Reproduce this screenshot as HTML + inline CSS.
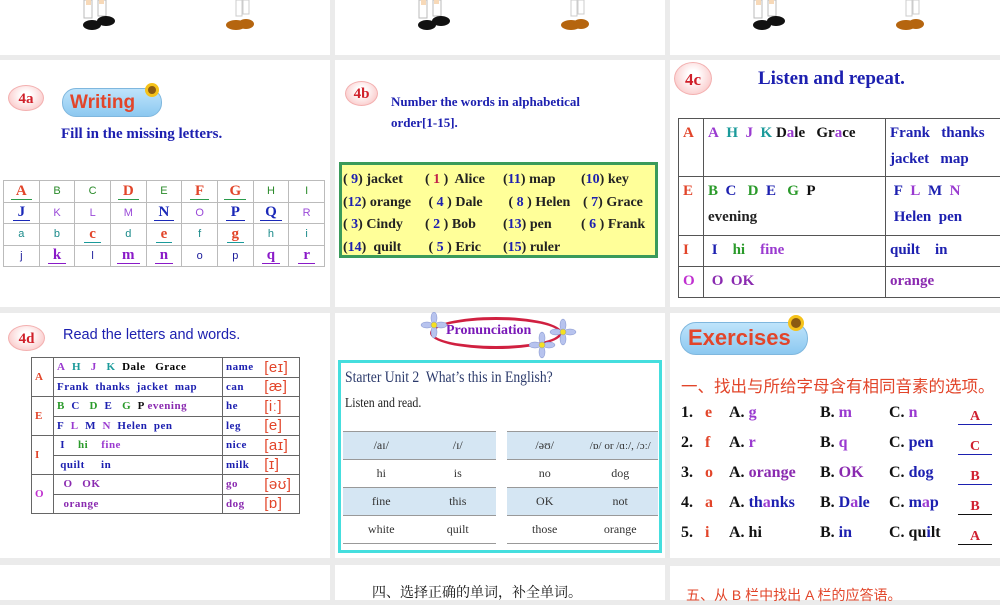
<!DOCTYPE html>
<html><head><meta charset="utf-8"><style>
*{margin:0;padding:0;box-sizing:border-box}
body{width:1000px;height:600px;background:#ebebeb;position:relative;overflow:hidden;font-family:"Liberation Serif",serif}
.p{position:absolute;background:#fff}
.a{position:absolute;white-space:nowrap}
.ov{position:absolute;border-radius:50%;background:radial-gradient(ellipse at 50% 40%,#fff 20%,#fbd3d3 70%,#f19a9a);border:1px solid #f3b0b0;color:#d0202a;font-weight:bold;font-size:15px;text-align:center}
.pill{position:absolute;border-radius:14px;background:linear-gradient(#bfe4fb,#8cc8f0);border:1px solid #7fb7de;color:#e2452a;font-family:"Liberation Sans",sans-serif;font-weight:bold}
table{border-collapse:collapse;position:absolute}
.t1 td{border:1px solid #bbb;text-align:center;font-family:"Liberation Sans",sans-serif;font-size:11px;height:21.5px;width:35.8px}
.t1 u{font-family:"Liberation Serif",serif;font-weight:bold;font-size:15px;text-decoration:none;border-bottom:1.5px solid;padding:0 5px}
.b{font-weight:bold}
.t3 td{border:1px solid #555;font-weight:bold;font-size:15px;vertical-align:top;padding:1px 4px;line-height:26px;white-space:nowrap}
.t4 td{border:1px solid #666;font-weight:bold;font-size:11px;height:19.5px;padding:0 3px;letter-spacing:.5px}
.t5{font-size:12px;color:#333}
.t5 td{height:28px;text-align:center;border-top:1px solid #999;width:76px}
.t5 tr.h td{background:#d5e6f3}
.ex{position:absolute;font-weight:bold;font-size:16px;color:#111}
.sun{position:absolute;width:14px;height:14px;border-radius:50%;background:#8a5a12;border:3px solid #f5c21a}
</style></head><body>
<div class="p" style="left:0;top:0;width:330px;height:55px"></div>
<div class="p" style="left:335px;top:0;width:330px;height:55px"></div>
<div class="p" style="left:670px;top:0;width:330px;height:55px"></div>
<svg class="a" style="left:0;top:0" width="1000" height="40">
<g id="g"><rect x="84" y="0" width="8" height="18" fill="#fff" stroke="#bbb"/><rect x="98" y="0" width="8" height="16" fill="#fff" stroke="#bbb"/><rect x="86" y="0" width="5" height="5" fill="#f7d9b8"/><rect x="99" y="0" width="5" height="4" fill="#f7d9b8"/>
<ellipse cx="92" cy="25" rx="9" ry="5" fill="#111"/><ellipse cx="106" cy="21" rx="9" ry="5" fill="#111"/>
<rect x="236" y="0" width="6" height="16" fill="#fff" stroke="#ccc"/><rect x="243" y="0" width="6" height="14" fill="#fff" stroke="#ccc"/>
<ellipse cx="236" cy="25" rx="10" ry="5" fill="#b5650f"/><ellipse cx="246" cy="24" rx="8" ry="5" fill="#b5650f"/></g>
<use href="#g" x="335"/><use href="#g" x="670"/>
</svg>
<!-- 4a -->
<div class="p" style="left:0;top:60px;width:330px;height:247px"></div>
<div class="ov" style="left:8px;top:85px;width:36px;height:26px;line-height:26px">4a</div>
<div class="pill" style="left:62px;top:88px;width:100px;height:29px;font-size:19px;line-height:28px;padding-left:7px">Writing</div>
<div class="sun" style="left:145px;top:83px"></div>
<div class="a b" style="left:61px;top:126px;font-size:15px;color:#1d20b0">Fill in the missing letters.</div>
<table class="t1" style="left:3px;top:180px;width:322px">
<tr style="color:#2a8a2a"><td><u style="color:#e2452a;border-color:#2a9a4a">A</u></td><td>B</td><td>C</td><td><u style="color:#e2452a;border-color:#2a9a4a">D</u></td><td>E</td><td><u style="color:#e2452a;border-color:#2a9a4a">F</u></td><td><u style="color:#e2452a;border-color:#2a9a4a">G</u></td><td>H</td><td>I</td></tr>
<tr style="color:#9a4ad8"><td><u style="color:#1a28b8">J</u></td><td>K</td><td>L</td><td>M</td><td><u style="color:#1a28b8">N</u></td><td>O</td><td><u style="color:#1a28b8">P</u></td><td><u style="color:#1a28b8">Q</u></td><td>R</td></tr>
<tr style="color:#1a8a8a"><td>a</td><td>b</td><td><u style="color:#e2452a;border-color:#1a9a9a">c</u></td><td>d</td><td><u style="color:#e2452a;border-color:#1a9a9a">e</u></td><td>f</td><td><u style="color:#e2452a;border-color:#1a9a9a">g</u></td><td>h</td><td>i</td></tr>
<tr style="color:#1a1a9a"><td>j</td><td><u style="color:#8a1ac8">k</u></td><td>l</td><td><u style="color:#8a1ac8">m</u></td><td><u style="color:#8a1ac8">n</u></td><td>o</td><td>p</td><td><u style="color:#8a1ac8">q</u></td><td><u style="color:#8a1ac8">r</u></td></tr>
</table>
<!-- 4b -->
<div class="p" style="left:335px;top:60px;width:330px;height:247px"></div>
<div class="ov" style="left:345px;top:81px;width:33px;height:25px;line-height:25px">4b</div>
<div class="a b" style="left:391px;top:91px;font-size:13px;color:#1d20b0;line-height:21px">Number the words in alphabetical<br>order[1-15].</div>
<div class="a" style="left:339px;top:162px;width:319px;height:96px;background:#ffff99;border:3px solid #3a9a5a"></div>
<div class="a b" style="left:343px;top:169px;font-size:14px;color:#222;line-height:22.5px">
<span style="display:inline-block;width:82px">( <span style="color:#1d20b0">9</span>) jacket</span><span style="display:inline-block;width:78px">( <span style="color:#c0204a">1</span> )&nbsp; Alice</span><span style="display:inline-block;width:78px">(<span style="color:#1d20b0">11</span>) map</span>(<span style="color:#1d20b0">10</span>) key<br>
<span style="display:inline-block;width:82px">(<span style="color:#1d20b0">12</span>) orange</span><span style="display:inline-block;width:80px">&nbsp;( <span style="color:#1d20b0">4</span> ) Dale</span><span style="display:inline-block;width:78px">&nbsp;( <span style="color:#1d20b0">8</span> ) Helen</span>( <span style="color:#1d20b0">7</span>) Grace<br>
<span style="display:inline-block;width:82px">( <span style="color:#1d20b0">3</span>) Cindy</span><span style="display:inline-block;width:78px">( <span style="color:#1d20b0">2</span> ) Bob</span><span style="display:inline-block;width:78px">(<span style="color:#1d20b0">13</span>) pen</span>( <span style="color:#1d20b0">6</span> ) Frank<br>
<span style="display:inline-block;width:82px">(<span style="color:#1d20b0">14</span>)&nbsp; quilt</span><span style="display:inline-block;width:78px">&nbsp;( <span style="color:#1d20b0">5</span> ) Eric</span>(<span style="color:#1d20b0">15</span>) ruler</div>
<!-- 4c -->
<div class="p" style="left:670px;top:60px;width:330px;height:247px"></div>
<div class="ov" style="left:674px;top:62px;width:38px;height:33px;line-height:33px;font-size:17px">4c</div>
<div class="a b" style="left:758px;top:68px;font-size:19px;color:#1d20b0">Listen and repeat.</div>
<table class="t3" style="left:678px;top:118px;width:324px">
<tr style="height:58px"><td style="width:25px;color:#e2452a">A</td><td style="width:182px"><span style="color:#9a3ad0">A</span>&nbsp; <span style="color:#1a9a9a">H</span>&nbsp; <span style="color:#9a3ad0">J</span>&nbsp; <span style="color:#1a9a9a">K</span> <span style="color:#111">D<span style="color:#9a3ad0">a</span>le&nbsp;&nbsp; Gr<span style="color:#9a3ad0">a</span>ce</span></td><td style="color:#1d20b0">Frank&nbsp;&nbsp; thanks<br>jacket&nbsp;&nbsp; map</td></tr>
<tr style="height:59px"><td style="color:#e2452a">E</td><td><span style="color:#2a9a2a">B</span>&nbsp; <span style="color:#1d20b0">C</span>&nbsp;&nbsp; <span style="color:#2a9a2a">D</span>&nbsp; <span style="color:#1d20b0">E</span>&nbsp;&nbsp; <span style="color:#2a9a2a">G</span>&nbsp; <span style="color:#111">P</span><br><span style="color:#222">evening</span></td><td style="color:#1d20b0">&nbsp;F&nbsp; <span style="color:#9a3ad0">L</span>&nbsp; M&nbsp; <span style="color:#9a3ad0">N</span><br>&nbsp;Helen&nbsp; pen</td></tr>
<tr style="height:31px"><td style="color:#e2452a">I</td><td>&nbsp;<span style="color:#1d20b0">I</span>&nbsp;&nbsp;&nbsp; <span style="color:#2a9a2a">hi</span>&nbsp;&nbsp;&nbsp; <span style="color:#9a3ad0">fine</span></td><td style="color:#1d20b0">quilt&nbsp;&nbsp;&nbsp; in</td></tr>
<tr style="height:31px"><td style="color:#c030d0">O</td><td style="color:#8a2ab0">&nbsp;O&nbsp; OK</td><td style="color:#8a2ab0">orange</td></tr>
</table>
<!-- 4d -->
<div class="p" style="left:0;top:313px;width:330px;height:245px"></div>
<div class="ov" style="left:8px;top:325px;width:37px;height:26px;line-height:26px">4d</div>
<div class="a" style="left:63px;top:327px;font-family:'Liberation Sans',sans-serif;font-size:14.5px;color:#1d20b0">Read the letters and words.</div>
<table class="t4" style="left:31px;top:357px;width:269px">
<tr><td rowspan="2" style="width:22px;color:#e2452a">A</td><td style="width:169px"><span style="color:#9a3ad0">A</span>&nbsp; <span style="color:#1a9a9a">H</span>&nbsp;&nbsp; <span style="color:#9a3ad0">J</span>&nbsp;&nbsp; <span style="color:#1a9a9a">K</span>&nbsp; Dale&nbsp;&nbsp; Grace</td><td style="color:#1d20b0;border-right:none">name</td><td style="border-left:none;color:#e2452a;font-weight:normal;font-family:'Liberation Sans';font-size:15px">[eɪ]</td></tr>
<tr><td style="color:#1d20b0">Frank&nbsp; thanks&nbsp; jacket&nbsp; map</td><td style="color:#1d20b0;border-right:none">can</td><td style="border-left:none;color:#e2452a;font-weight:normal;font-family:'Liberation Sans';font-size:15px">[æ]</td></tr>
<tr><td rowspan="2" style="color:#e2452a">E</td><td><span style="color:#2a9a2a">B</span>&nbsp; <span style="color:#1d20b0">C</span>&nbsp;&nbsp; <span style="color:#2a9a2a">D</span>&nbsp; <span style="color:#1d20b0">E</span>&nbsp;&nbsp; <span style="color:#2a9a2a">G</span>&nbsp; <span style="color:#111">P</span> <span style="color:#8a2ab0">evening</span></td><td style="color:#1d20b0;border-right:none">he</td><td style="border-left:none;color:#e2452a;font-weight:normal;font-family:'Liberation Sans';font-size:15px">[iː]</td></tr>
<tr><td style="color:#1d20b0">F&nbsp; <span style="color:#9a3ad0">L</span>&nbsp; M&nbsp; <span style="color:#9a3ad0">N</span>&nbsp; Helen&nbsp; pen</td><td style="color:#1d20b0;border-right:none">leg</td><td style="border-left:none;color:#e2452a;font-weight:normal;font-family:'Liberation Sans';font-size:15px">[e]</td></tr>
<tr><td rowspan="2" style="color:#e2452a">I</td><td>&nbsp;<span style="color:#1d20b0">I</span>&nbsp;&nbsp;&nbsp; <span style="color:#2a9a2a">hi</span>&nbsp;&nbsp;&nbsp; <span style="color:#9a3ad0">fine</span></td><td style="color:#1d20b0;border-right:none">nice</td><td style="border-left:none;color:#e2452a;font-weight:normal;font-family:'Liberation Sans';font-size:15px">[aɪ]</td></tr>
<tr><td style="color:#1d20b0">&nbsp;quilt&nbsp;&nbsp;&nbsp;&nbsp; in</td><td style="color:#1d20b0;border-right:none">milk</td><td style="border-left:none;color:#e2452a;font-weight:normal;font-family:'Liberation Sans';font-size:15px">[ɪ]</td></tr>
<tr><td rowspan="2" style="color:#c030d0">O</td><td style="color:#8a2ab0">&nbsp;&nbsp;O&nbsp;&nbsp; OK</td><td style="color:#8a2ab0;border-right:none">go</td><td style="border-left:none;color:#e2452a;font-weight:normal;font-family:'Liberation Sans';font-size:15px">[əʊ]</td></tr>
<tr><td style="color:#8a2ab0">&nbsp;&nbsp;orange</td><td style="color:#8a2ab0;border-right:none">dog</td><td style="border-left:none;color:#e2452a;font-weight:normal;font-family:'Liberation Sans';font-size:15px">[ɒ]</td></tr>
</table>
<!-- Pronunciation -->
<div class="p" style="left:335px;top:313px;width:330px;height:245px"></div>
<div class="a" style="left:430px;top:317px;width:132px;height:32px;border:3px solid #d02040;border-radius:50%;background:#fff"></div>
<div class="a b" style="left:446px;top:323px;font-size:14px;color:#7a1ab8">Pronunciation</div>
<svg class="a" style="left:420px;top:312px" width="160" height="50">
<g fill="#b7c3ee" stroke="#8090cc" stroke-width=".5"><g id="fl"><ellipse cx="14" cy="6" rx="3" ry="6"/><ellipse cx="14" cy="20" rx="3" ry="6"/><ellipse cx="7" cy="13" rx="6" ry="3"/><ellipse cx="21" cy="13" rx="6" ry="3"/><circle cx="14" cy="13" r="3" fill="#f5e020"/></g>
<use href="#fl" x="129" y="7"/><use href="#fl" x="108" y="20"/></g></svg>
<div class="a" style="left:338px;top:360px;width:324px;height:193px;border:3px solid #45dede;background:#fff"></div>
<div class="a" style="left:345px;top:369px;font-size:15.5px;color:#2b3a6b;transform:scaleX(.88);transform-origin:left">Starter Unit 2&nbsp; What’s this in English?</div>
<div class="a" style="left:345px;top:396px;font-size:14px;color:#222;transform:scaleX(.85);transform-origin:left">Listen and read.</div>
<table class="t5" style="left:343px;top:431px;width:153px"><tr class="h"><td>/aɪ/</td><td>/ɪ/</td></tr><tr><td>hi</td><td>is</td></tr><tr class="h"><td>fine</td><td>this</td></tr><tr style="border-bottom:1px solid #999"><td>white</td><td>quilt</td></tr></table>
<table class="t5" style="left:507px;top:431px;width:151px"><tr class="h"><td>/əʊ/</td><td style="font-size:11px">/ɒ/ or /ɑː/, /ɔː/</td></tr><tr><td>no</td><td>dog</td></tr><tr class="h"><td>OK</td><td>not</td></tr><tr style="border-bottom:1px solid #999"><td>those</td><td>orange</td></tr></table>
<!-- Exercises -->
<div class="p" style="left:670px;top:313px;width:330px;height:245px"></div>
<div class="pill" style="left:680px;top:322px;width:128px;height:33px;font-size:22px;line-height:30px;padding-left:7px;border-radius:16px">Exercises</div>
<div class="sun" style="left:788px;top:315px;width:16px;height:16px"></div>
<div class="a" style="left:681px;top:373px;font-family:'Noto Sans CJK SC',sans-serif;font-size:16.5px;color:#e2452a">一、找出与所给字母含有相同音素的选项。</div>
<div class="ex" style="left:681px;top:398px;line-height:30px">1.<br>2.<br>3.<br>4.<br>5.</div>
<div class="ex" style="left:705px;top:398px;line-height:30px;color:#e2452a">e<br>f<br>o<br>a<br>i</div>
<div class="ex" style="left:729px;top:398px;line-height:30px">A. <span style="color:#9a3ad0">g</span><br>A. <span style="color:#9a3ad0">r</span><br>A. <span style="color:#8a2ab0">orange</span><br>A. <span style="color:#1d20b0">th<span style="color:#9a3ad0">a</span>nks</span><br>A. hi</div>
<div class="ex" style="left:820px;top:398px;line-height:30px">B. <span style="color:#9a3ad0">m</span><br>B. <span style="color:#9a3ad0">q</span><br>B. <span style="color:#8a2ab0">OK</span><br>B. <span style="color:#1d20b0">D<span style="color:#9a3ad0">a</span>le</span><br>B. <span style="color:#1d20b0">in</span></div>
<div class="ex" style="left:889px;top:398px;line-height:30px">C. <span style="color:#9a3ad0">n</span><br>C. <span style="color:#1d20b0">pen</span><br>C. <span style="color:#1d20b0">dog</span><br>C. <span style="color:#1d20b0">m<span style="color:#9a3ad0">a</span>p</span><br>C. qu<span style="color:#1d20b0">i</span>lt</div>
<div class="ex" style="left:958px;top:395px;color:#d02030;font-size:14px;width:34px;text-align:center;line-height:14px">
<div style="border-bottom:1.5px solid #1d20b0;height:30px;padding-top:15px">A</div><div style="border-bottom:1.5px solid #1d20b0;height:30px;padding-top:15px">C</div><div style="border-bottom:1.5px solid #1d20b0;height:30px;padding-top:15px">B</div><div style="border-bottom:1.5px solid #111;height:30px;padding-top:15px">B</div><div style="border-bottom:1.5px solid #111;height:30px;padding-top:15px">A</div></div>
<!-- row4 -->
<div class="p" style="left:0;top:565px;width:330px;height:35px"></div>
<div class="p" style="left:335px;top:565px;width:330px;height:35px"></div>
<div class="p" style="left:670px;top:566px;width:330px;height:34px"></div>
<div class="a" style="left:372px;top:582px;font-family:'Liberation Serif','Noto Serif CJK SC',serif;font-size:14px;color:#111">四、选择正确的单词，补全单词。</div>
<div class="a" style="left:686px;top:585px;font-family:'Liberation Sans','Noto Sans CJK SC',sans-serif;font-size:14px;color:#e2452a">五、从 B 栏中找出 A 栏的应答语。</div>
</body></html>
